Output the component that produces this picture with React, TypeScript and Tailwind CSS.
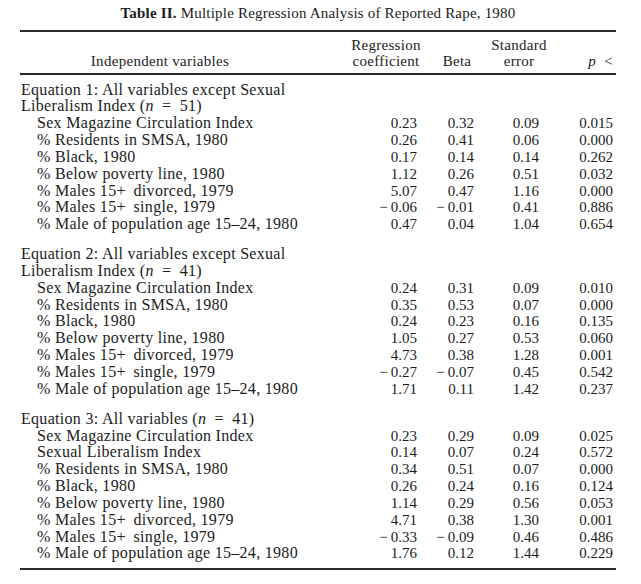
import React from 'react';

type Row = { label: string; coef: string; beta: string; se: string; p: string };

interface Block {
  heading: React.ReactNode[];
  rows: Row[];
}

const N = ({ v }: { v: string }) => (
  <>
    (<i>n</i>{'\u2002=\u2002'}{v})
  </>
);

const blocks: Block[] = [
  {
    heading: ['Equation 1: All variables except Sexual', <>Liberalism Index <N v="51" /></>],
    rows: [
      { label: 'Sex Magazine Circulation Index', coef: '0.23', beta: '0.32', se: '0.09', p: '0.015' },
      { label: '% Residents in SMSA, 1980', coef: '0.26', beta: '0.41', se: '0.06', p: '0.000' },
      { label: '% Black, 1980', coef: '0.17', beta: '0.14', se: '0.14', p: '0.262' },
      { label: '% Below poverty line, 1980', coef: '1.12', beta: '0.26', se: '0.51', p: '0.032' },
      { label: '% Males 15+ \u2009divorced, 1979', coef: '5.07', beta: '0.47', se: '1.16', p: '0.000' },
      { label: '% Males 15+ \u2009single, 1979', coef: '\u2212\u20090.06', beta: '\u2212\u20090.01', se: '0.41', p: '0.886' },
      { label: '% Male of population age 15\u201324, 1980', coef: '0.47', beta: '0.04', se: '1.04', p: '0.654' },
    ],
  },
  {
    heading: ['Equation 2: All variables except Sexual', <>Liberalism Index <N v="41" /></>],
    rows: [
      { label: 'Sex Magazine Circulation Index', coef: '0.24', beta: '0.31', se: '0.09', p: '0.010' },
      { label: '% Residents in SMSA, 1980', coef: '0.35', beta: '0.53', se: '0.07', p: '0.000' },
      { label: '% Black, 1980', coef: '0.24', beta: '0.23', se: '0.16', p: '0.135' },
      { label: '% Below poverty line, 1980', coef: '1.05', beta: '0.27', se: '0.53', p: '0.060' },
      { label: '% Males 15+ \u2009divorced, 1979', coef: '4.73', beta: '0.38', se: '1.28', p: '0.001' },
      { label: '% Males 15+ \u2009single, 1979', coef: '\u2212\u20090.27', beta: '\u2212\u20090.07', se: '0.45', p: '0.542' },
      { label: '% Male of population age 15\u201324, 1980', coef: '1.71', beta: '0.11', se: '1.42', p: '0.237' },
    ],
  },
  {
    heading: [<>Equation 3: All variables <N v="41" /></>],
    rows: [
      { label: 'Sex Magazine Circulation Index', coef: '0.23', beta: '0.29', se: '0.09', p: '0.025' },
      { label: 'Sexual Liberalism Index', coef: '0.14', beta: '0.07', se: '0.24', p: '0.572' },
      { label: '% Residents in SMSA, 1980', coef: '0.34', beta: '0.51', se: '0.07', p: '0.000' },
      { label: '% Black, 1980', coef: '0.26', beta: '0.24', se: '0.16', p: '0.124' },
      { label: '% Below poverty line, 1980', coef: '1.14', beta: '0.29', se: '0.56', p: '0.053' },
      { label: '% Males 15+ \u2009divorced, 1979', coef: '4.71', beta: '0.38', se: '1.30', p: '0.001' },
      { label: '% Males 15+ \u2009single, 1979', coef: '\u2212\u20090.33', beta: '\u2212\u20090.09', se: '0.46', p: '0.486' },
      { label: '% Male of population age 15\u201324, 1980', coef: '1.76', beta: '0.12', se: '1.44', p: '0.229' },
    ],
  },
];

// label | coef | beta | se | p  -> right edges at 340, 417, 474, 539, 613
const cols = 'grid grid-cols-[320px_77px_57px_65px_74px]';

export default function App() {
  return (
    <div className="min-h-[584px] w-[641px] bg-white text-[#1c1c1c] text-[15px] font-['Liberation_Serif',serif]">
      <div className="ml-[20px] w-[596px] pt-[5px]">
        <div className="text-center leading-[17px] tracking-[0.2px]">
          <b>Table II.</b> Multiple Regression Analysis of Reported Rape, 1980
        </div>
        <div className="mt-[8px] h-[2px] bg-[#2a2a2a]" />

        {/* column headings */}
        <div className={`${cols} pt-[5px] leading-[16px] tracking-[0.3px]`}>
          <div className="flex items-end justify-center pr-[40px] whitespace-nowrap">Independent variables</div>
          <div className="flex flex-col items-center pl-[15px] whitespace-nowrap">
            <span>Regression</span>
            <span>coefficient</span>
          </div>
          <div className="flex items-end justify-center pl-[23px]">Beta</div>
          <div className="flex flex-col items-center pl-[25px] whitespace-nowrap">
            <span>Standard</span>
            <span>error</span>
          </div>
          <div className="flex items-end justify-end whitespace-nowrap">
            <i>p</i>&nbsp;&nbsp;&lt;
          </div>
        </div>
        <div className="mt-[4px] h-[1.5px] bg-[#2a2a2a]" />

        <div className="pt-[7px] leading-[16.85px]">
          {blocks.map((b, i) => (
            <div key={i} className={i > 0 ? 'mt-[13px]' : ''}>
              {b.heading.map((h, j) => (
                <div key={j} className="pl-[1px] whitespace-nowrap text-[16px] tracking-[0.3px]">{h}</div>
              ))}
              {b.rows.map((r, k) => (
                <div key={k} className={`${cols} whitespace-nowrap`}>
                  <div className="pl-[17px] text-[16px] tracking-[0.3px]">{r.label}</div>
                  <div className="text-right">{r.coef}</div>
                  <div className="text-right">{r.beta}</div>
                  <div className="text-right">{r.se}</div>
                  <div className="text-right">{r.p}</div>
                </div>
              ))}
            </div>
          ))}
        </div>
        <div className="mt-[6px] h-[2px] bg-[#2a2a2a]" />
      </div>
    </div>
  );
}
